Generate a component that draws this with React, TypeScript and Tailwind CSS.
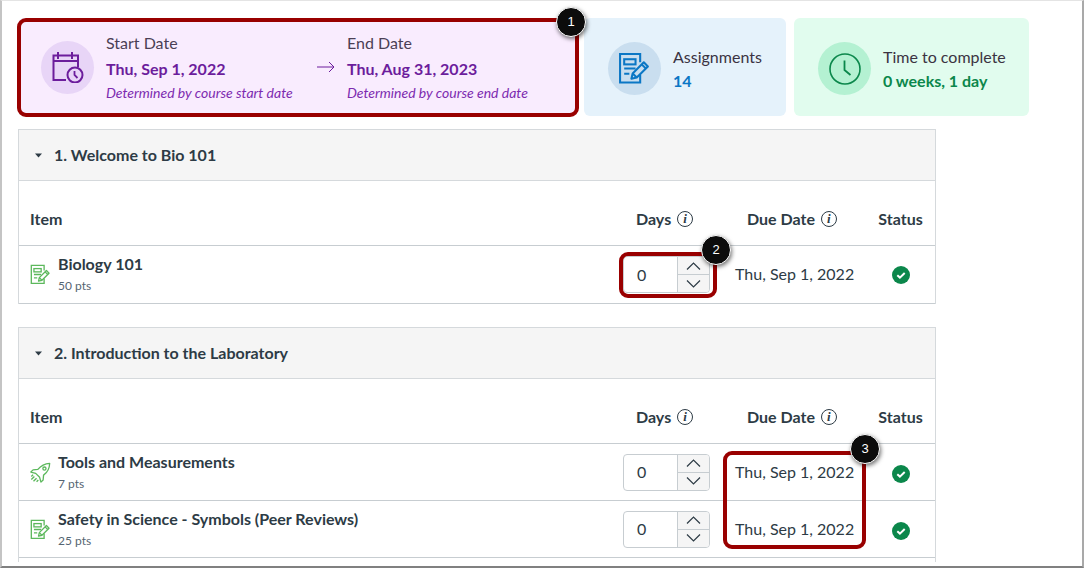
import type { ReactNode } from "react"

const lato = "font-['Lato','Open_Sans',sans-serif]"

function AssignmentIcon({ className }: { className: string }) {
  return (
    <svg viewBox="0 0 32 32" fill="none" stroke="currentColor" strokeWidth="2" className={className}>
      <path d="M21.5 22v7.5H2V2h19.5v8" />
      <rect x="6" y="7" width="11" height="5" />
      <path d="M6 16h11M6 21h5" />
      <path d="M13 26l1.2-5.2L25 10l4 4-10.8 10.8z" strokeLinejoin="round" />
      <path d="M23 12l4 4M14.2 20.8l4 4" />
    </svg>
  )
}

function RocketIcon({ className }: { className: string }) {
  return (
    <svg viewBox="0 0 24 24" fill="none" stroke="currentColor" strokeWidth="1.5" strokeLinejoin="round" className={className}>
      <path d="M22.5 1.5c-6 .3-10 2.6-13.5 7L3.5 9 1 11.5l5.5 1.5 4.5 4.5 1.5 5.5 2.5-2.5.5-5.500C20 12 22.300 7.500 22.500 1.500z" />
      <circle cx="16.500" cy="7.500" r="1.800" />
      <path d="M5 16.500l-3.500 3.500M7.500 18.500l-3.500 3.500M3.500 14.500l-2 2M9.500 20.500l-2 2" />
    </svg>
  )
}

function CalendarClockIcon() {
  return (
    <svg viewBox="0 0 32 32" fill="none" stroke="currentColor" strokeWidth="2" className="size-8">
      <path d="M14 29H1.500V4.500h24.500V16" />
      <path d="M1.500 10h24.500M6 1v7M20 1v7" />
      <circle cx="23" cy="24" r="7.500" />
      <path d="M22.500 20v4l3 3" strokeWidth="1.800" />
    </svg>
  )
}

function ClockIcon() {
  return (
    <svg viewBox="0 0 32 32" fill="none" stroke="currentColor" strokeWidth="1.600" className="size-8 text-[#0b874b]">
      <circle cx="16" cy="16" r="15" />
      <path d="M15.500 7.500V17l6 5" strokeWidth="1.800" />
    </svg>
  )
}

function InfoIcon() {
  return (
    <span className="inline-flex size-[16px] items-center justify-center rounded-full border border-[#2d3b45] font-['Liberation_Serif',serif] text-[13px] font-bold italic leading-none">
      i
    </span>
  )
}

function StatusCheck() {
  return (
    <svg viewBox="0 0 18 18" className="size-[18px]">
      <circle cx="9" cy="9" r="9" fill="#0b874b" />
      <path d="M5.300 9.200l2.600 2.400 4.800-4.600" fill="none" stroke="#fff" strokeWidth="2" />
    </svg>
  )
}

function Stepper() {
  return (
    <div className="flex h-[37px] w-[87px] overflow-hidden rounded-[4px] border border-[#c7cdd1] bg-white">
      <div className="flex flex-1 items-center pl-[13px] text-[16px] text-[#2d3b45]">0</div>
      <div className="flex w-[32px] flex-col border-l border-[#c7cdd1] bg-[#f5f5f5] text-[#2d3b45]">
        <div className="flex flex-1 items-center justify-center border-b border-[#c7cdd1]">
          <svg viewBox="0 0 15 8" fill="none" stroke="currentColor" strokeWidth="1.200" className="h-[8px] w-[15px]">
            <path d="M1 7.500L7.500 1 14 7.500" />
          </svg>
        </div>
        <div className="flex flex-1 items-center justify-center">
          <svg viewBox="0 0 15 8" fill="none" stroke="currentColor" strokeWidth="1.200" className="h-[8px] w-[15px]">
            <path d="M1 .5L7.500 7 14 .5" />
          </svg>
        </div>
      </div>
    </div>
  )
}

function Callout({ n, className }: { n: number; className: string }) {
  return (
    <div className={`absolute z-20 flex size-[30px] items-center justify-center rounded-full border border-white bg-[#0c0c0c] font-['Liberation_Sans',sans-serif] text-[13px] text-white shadow-[1px_2px_4px_rgba(0,0,0,0.55)] ${className}`}>
      {n}
    </div>
  )
}

const rowGrid = "grid grid-cols-[604px_87px_158px_65px]"

function TableHead() {
  return (
    <div className={`${rowGrid} h-[65px] items-center border-b border-[#c7cdd1] pt-[11px] text-[16px] font-bold text-[#2d3b45]`}>
      <span className="pl-[11px]">Item</span>
      <span className="flex items-center gap-[6px] pl-[13px]">
        Days <InfoIcon />
      </span>
      <span className="flex items-center gap-[6px] pl-[37px]">
        Due Date <InfoIcon />
      </span>
      <span className="text-center">Status</span>
    </div>
  )
}

function ItemRow({ icon, title, pts, short }: { icon: ReactNode; title: string; pts: string; short?: boolean }) {
  return (
    <div className={`${rowGrid} ${short ? "h-[57px]" : "h-[58px]"} items-center border-b border-[#c7cdd1]`}>
      <div className="flex items-center gap-[7px] pl-[11px]">
        {icon}
        <div className={`flex flex-col ${short ? "pb-[1px]" : "pb-[3px]"}`}>
          <span className="text-[16px] leading-[20px] font-bold text-[#2d3b45]">{title}</span>
          <span className="mt-[4px] text-[12px] leading-[15px] text-[#556572]">{pts}</span>
        </div>
      </div>
      <Stepper />
      <span className={`pl-[25px] text-[16px] text-[#2d3b45] ${short ? "" : "pb-[2px]"}`}>Thu, Sep 1, 2022</span>
      <div className={`flex justify-center ${short ? "pt-[3px]" : ""}`}>
        <StatusCheck />
      </div>
    </div>
  )
}

function SectionHeader({ title }: { title: string }) {
  return (
    <div className="flex h-[51px] items-center gap-[12px] border-b border-[#d5d9dc] bg-[#f5f5f5] pl-[16px] text-[16px] font-bold text-[#2d3b45]">
      <svg viewBox="0 0 10 6" className="h-[5px] w-[7px] fill-[#2d3b45]">
        <path d="M0 0h10L5 6z" />
      </svg>
      {title}
    </div>
  )
}

function IconCircle({ className, children }: { className: string; children: ReactNode }) {
  return <div className={`flex size-[53px] shrink-0 items-center justify-center rounded-full ${className}`}>{children}</div>
}

function DateBlock({ label, date, note }: { label: string; date: string; note: string }) {
  return (
    <div className="flex flex-col">
      <span className="text-[16px] leading-[20px] text-[#4b3f55]">{label}</span>
      <span className="mt-[6px] text-[16px] leading-[20px] font-bold text-[#6c1d9c]">{date}</span>
      <span className="mt-[5px] text-[14px] leading-[18px] text-[#7d2bb0] italic">{note}</span>
    </div>
  )
}

export default function App() {
  return (
    <div className={`${lato} relative h-[570px] w-[1085px] overflow-hidden bg-white`}>
      <div className="h-[568px] w-[1084px] overflow-hidden border-t border-r-2 border-b-2 border-l-2 border-t-[#e4e4e4] border-r-[#a9a9a9] border-b-[#808080] border-l-[#c4c4c4] pt-[17px] pl-[16px]">
        {/* Summary cards */}
        <div className="flex h-[98px]">
          <div className="flex w-[560px] items-center rounded-[6px] bg-[#f9ecfe] pl-[23px]">
            <IconCircle className="bg-[#e8d5f7] text-[#6c1d9c]">
              <CalendarClockIcon />
            </IconCircle>
            <div className="ml-[12px] w-[211px]">
              <DateBlock label="Start Date" date="Thu, Sep 1, 2022" note="Determined by course start date" />
            </div>
            <svg viewBox="0 0 18 12" fill="none" stroke="#6c1d9c" className="mr-[12px] h-[12px] w-[18px]">
              <path d="M0 6h17M12 1l5 5-5 5" />
            </svg>
            <DateBlock label="End Date" date="Thu, Aug 31, 2023" note="Determined by course end date" />
          </div>
          <div className="ml-[6px] flex w-[202px] items-center gap-[12px] rounded-[6px] bg-[#e5f2fb] pt-[3px] pl-[24px]">
            <IconCircle className="bg-[#c9deef] text-[#0b77c5]">
              <AssignmentIcon className="size-[33px]" />
            </IconCircle>
            <div className="flex flex-col">
              <span className="text-[16px] leading-[20px] text-[#3b3342]">Assignments</span>
              <span className="mt-[4px] text-[16px] leading-[20px] font-bold text-[#0b77c5]">14</span>
            </div>
          </div>
          <div className="ml-[8px] flex w-[235px] items-center gap-[12px] rounded-[6px] bg-[#e1fcee] pt-[3px] pl-[24px]">
            <IconCircle className="bg-[#b4f1d2]">
              <ClockIcon />
            </IconCircle>
            <div className="flex flex-col">
              <span className="text-[16px] leading-[20px] text-[#3b3342]">Time to complete</span>
              <span className="mt-[4px] text-[16px] leading-[20px] font-bold text-[#0b874b]">0 weeks, 1 day</span>
            </div>
          </div>
        </div>

        {/* Module 1 */}
        <div className="mt-[13px] w-[918px] border border-b-0 border-[#d5d9dc]">
          <SectionHeader title="1. Welcome to Bio 101" />
          <TableHead />
          <ItemRow
            icon={<AssignmentIcon className="size-[21px] text-[#5cb85c]" />}
            title="Biology 101"
            pts="50 pts"
          />
        </div>

        {/* Module 2 */}
        <div className="mt-[23px] w-[918px] border border-b-0 border-[#d5d9dc]">
          <SectionHeader title="2. Introduction to the Laboratory" />
          <TableHead />
          <ItemRow
            icon={<RocketIcon className="size-[21px] text-[#5cb85c]" />}
            title="Tools and Measurements"
            pts="7 pts"
            short
          />
          <ItemRow
            icon={<AssignmentIcon className="size-[21px] text-[#5cb85c]" />}
            title="Safety in Science - Symbols (Peer Reviews)"
            pts="25 pts"
            short
          />
          <div className="h-[4px]" />
        </div>
      </div>

      {/* Annotations */}
      <div className="absolute top-[18px] left-[17px] z-10 h-[99px] w-[562px] rounded-[9px] border-[4px] border-[#990000]" />
      <Callout n={1} className="top-[7px] left-[556px]" />
      <div className="absolute top-[252px] left-[619px] z-10 h-[46px] w-[98px] rounded-[9px] border-[4px] border-[#990000]" />
      <Callout n={2} className="top-[235px] left-[701px]" />
      <div className="absolute top-[451px] left-[723px] z-10 h-[98px] w-[143px] rounded-[9px] border-[4px] border-[#990000]" />
      <Callout n={3} className="top-[434px] left-[850px]" />
    </div>
  )
}
